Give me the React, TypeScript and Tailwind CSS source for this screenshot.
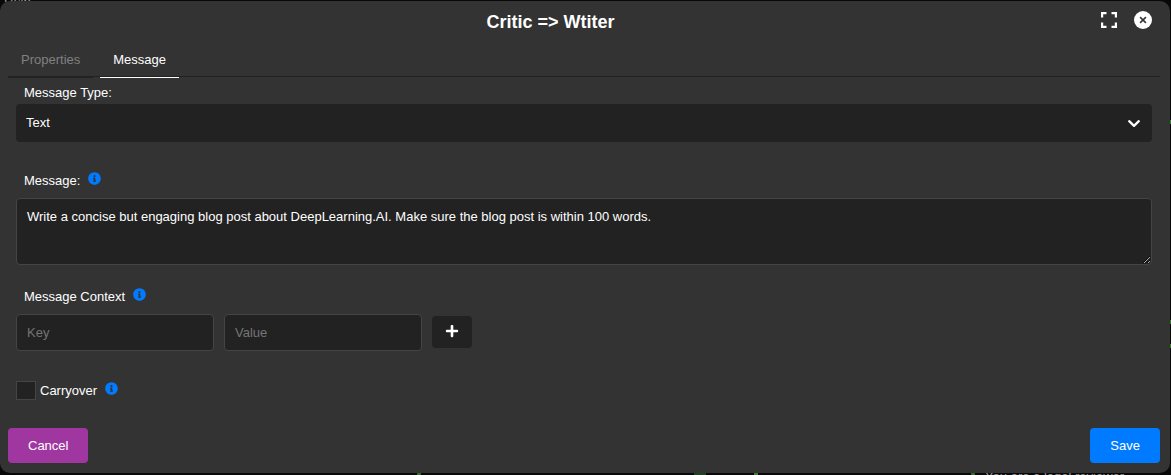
import { useState, type ReactNode } from "react";
import { FaInfoCircle, FaPlus } from "react-icons/fa";

function InfoIcon({ title }: { title: string }) {
  return (
    <button type="button" aria-label={title} className="mt-px ml-2 h-[13px] w-[13px] text-[#007bff]">
      <FaInfoCircle className="block h-[13px] w-[13px]" />
    </button>
  );
}

function FieldLabel({ htmlFor, children }: { htmlFor: string; children: ReactNode }) {
  return (
    <label htmlFor={htmlFor} className="leading-5">
      {children}
    </label>
  );
}

function CanvasBackdrop() {
  return (
    <div aria-hidden="true" className="absolute inset-0 overflow-hidden text-[13px] text-[#9a9a9a]">
      <div className="absolute -top-2.5 left-1 leading-4">Help</div>
      <div className="absolute -bottom-2.5 right-11 leading-4">You are a legal reviewer,</div>
      <div className="absolute bottom-0 left-[417px] h-0.5 w-1 bg-[#2f6b2f]" />
      <div className="absolute bottom-0 left-[754px] h-0.5 w-1 bg-[#3f7a3f]" />
      <div className="absolute bottom-0 left-[694px] h-0.5 w-3 bg-[#1f431f]" />
      <div className="absolute bottom-0 left-[971px] h-0.5 w-1 bg-[#2f6b2f]" />
      <div className="absolute right-0 top-[120px] h-1 w-px bg-[#3f7a3f]" />
      <div className="absolute right-0 top-[320px] h-1 w-px bg-[#2f7a2f]" />
      <div className="absolute right-0 top-[344px] h-1 w-px bg-[#2f7a2f]" />
    </div>
  );
}

export default function App() {
  const [tab, setTab] = useState("message");
  const [message, setMessage] = useState(
    "Write a concise but engaging blog post about DeepLearning.AI. Make sure the blog post is within 100 words."
  );
  const input =
    "h-[37px] w-[198px] rounded border border-[#454545] bg-[#222] px-2.5 text-[13px] text-white placeholder:text-[#757575]";

  return (
    <div className="relative min-h-screen bg-[#080808] pt-px pr-px pb-0.5 font-['Liberation_Sans',Arial,sans-serif] text-[13px] text-white">
      <CanvasBackdrop />
      <div role="dialog" aria-labelledby="dialog-title" className="relative rounded-[10px] bg-[#333] pt-px pr-2.5 pb-2.5 pl-2">
        <header className="flex h-9 items-center">
          <h1 id="dialog-title" className="mt-1 flex-1 text-center text-lg leading-6 font-bold">
            Critic =&gt; Wtiter
          </h1>
          <button type="button" aria-label="Full screen" className="p-2">
            <svg viewBox="0 0 16 16" className="h-4 w-4" fill="none" stroke="currentColor" strokeWidth="2.2">
              <path d="M1.1 5.5V1.1H5.5M10.5 1.1H14.9V5.5M14.9 10.5V14.9H10.5M5.5 14.9H1.1V10.5" />
            </svg>
          </button>
          <button type="button" aria-label="Close" className="py-2 pr-2 pl-[9px]">
            <svg viewBox="0 0 18 18" className="h-[18px] w-[18px]">
              <circle cx="9" cy="9" r="9" fill="#fff" />
              <path d="M6.1 6.1L11.9 11.9M11.9 6.1L6.1 11.9" stroke="#333" strokeWidth="1.5" />
            </svg>
          </button>
        </header>

        <div role="tablist" className="mt-1 flex gap-[7px] border-b border-[#222]">
          {[
            { id: "properties", label: "Properties" },
            { id: "message", label: "Message" },
          ].map((t) => (
            <button
              key={t.id}
              type="button"
              role="tab"
              aria-selected={tab === t.id}
              onClick={() => setTab(t.id)}
              className={
                tab === t.id
                  ? "-mb-0.5 h-9 border-b border-white px-[13px] text-white"
                  : "-mb-0.5 h-9 border-b border-[#222] px-[13px] text-[#808080]"
              }
            >
              {t.label}
            </button>
          ))}
        </div>

        <div className="px-2 pt-1.5">
          <div className="h-[21px] px-2 leading-5">
            <FieldLabel htmlFor="message-type">Message Type:</FieldLabel>
          </div>
          <div className="relative">
            <select id="message-type" className="h-[38px] w-full appearance-none rounded bg-[#222] px-2.5 text-[13px] text-white">
              <option>Text</option>
            </select>
            <svg
              viewBox="0 0 14 14"
              className="pointer-events-none absolute top-3 right-[11px] h-3.5 w-3.5"
              fill="none"
              stroke="#fff"
              strokeWidth="2.3"
              strokeLinecap="round"
              strokeLinejoin="round"
            >
              <path d="M2.2 5.2L7 9.8L11.8 5.2" />
            </svg>
          </div>

          <div className="mt-[29px] flex h-[27px] px-2">
            <FieldLabel htmlFor="message">Message:</FieldLabel>
            <InfoIcon title="About the message" />
          </div>
          <textarea
            id="message"
            value={message}
            onChange={(e) => setMessage(e.target.value)}
            className="block h-[67px] w-full resize-y rounded border border-[#454545] bg-[#222] px-2.5 py-2 text-[13px] leading-5 text-white"
          />

          <div className="mt-[22px] flex h-[27px] px-2">
            <FieldLabel htmlFor="context-key">Message Context</FieldLabel>
            <InfoIcon title="About the message context" />
          </div>
          <div className="flex items-start gap-2.5">
            <input id="context-key" placeholder="Key" className={input} />
            <input aria-label="Value" placeholder="Value" className={input} />
            <button type="button" aria-label="Add" className="mt-0.5 flex h-8 w-10 items-center justify-center rounded bg-[#222] pb-0.5">
              <FaPlus className="h-3.5 w-3.5" />
            </button>
          </div>

          <div className="mt-[30px] flex h-5">
            <input
              id="carryover"
              type="checkbox"
              className="mr-1 h-[19px] w-5 appearance-none border border-[#454545] bg-[#222] checked:bg-[#007bff]"
            />
            <FieldLabel htmlFor="carryover">Carryover</FieldLabel>
            <InfoIcon title="About carryover" />
          </div>
        </div>

        <footer className="mt-[27px] flex justify-between">
          <button type="button" className="h-[35px] rounded bg-[#a037a0] px-5">
            Cancel
          </button>
          <button type="button" className="h-[35px] rounded bg-[#007bff] px-5">
            Save
          </button>
        </footer>
      </div>
    </div>
  );
}
